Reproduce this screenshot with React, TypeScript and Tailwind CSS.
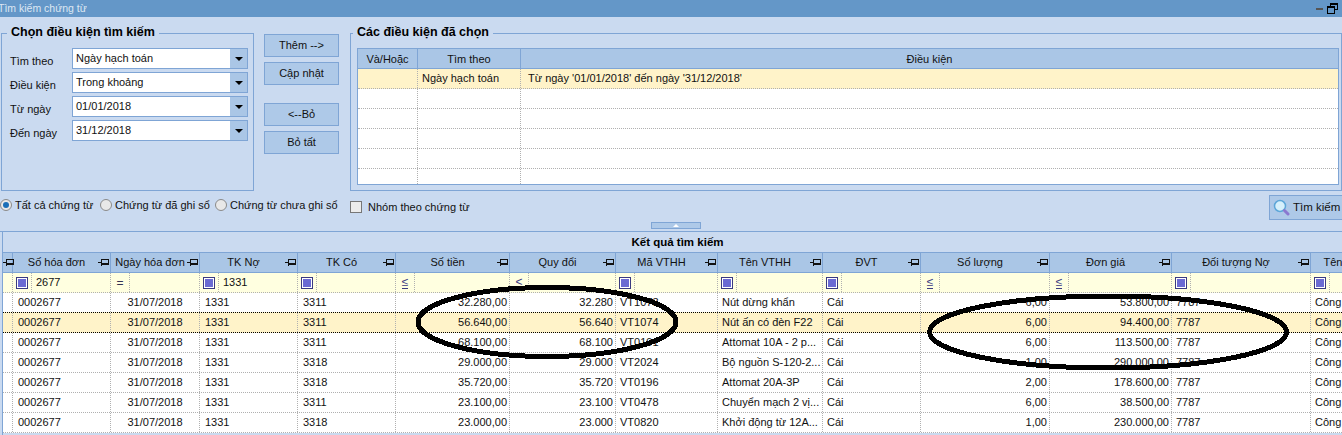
const COLS = "grid grid-cols-[98px_89px_98px_98px_114px_106px_102px_105px_98px_129px_122px_139px_55px]";

const headers = ["Số hóa đơn", "Ngày hóa đơn", "TK Nợ", "TK Có", "Số tiền", "Quy đổi", "Mã VTHH", "Tên VTHH", "ĐVT", "Số lượng", "Đơn giá", "Đối tượng Nợ", "Tên"];
const filters: [string, string][] = [["box", "2677"], ["eq", ""], ["box", "1331"], ["box", ""], ["le", ""], ["lt", ""], ["box", ""], ["box", ""], ["box", ""], ["le", ""], ["le", ""], ["box", ""], ["box", ""]];
const rows = [
  ["3311", "32.280,00", "32.280", "VT1073", "Nút dừng khẩn", "6,00", "53.800,00"],
  ["3311", "56.640,00", "56.640", "VT1074", "Nút ấn có đèn F22", "6,00", "94.400,00"],
  ["3311", "68.100,00", "68.100", "VT0191", "Attomat 10A - 2 p...", "6,00", "113.500,00"],
  ["3318", "29.000,00", "29.000", "VT2024", "Bộ nguồn S-120-2...", "1,00", "290.000,00"],
  ["3318", "35.720,00", "35.720", "VT0196", "Attomat 20A-3P", "2,00", "178.600,00"],
  ["3311", "23.100,00", "23.100", "VT0478", "Chuyển mạch 2 vị...", "6,00", "38.500,00"],
  ["3318", "23.000,00", "23.000", "VT0820", "Khởi động từ 12A...", "1,00", "230.000,00"],
];

function Pin() {
  return (
    <svg width="11" height="9" viewBox="0 0 11 9" className="shrink-0" shapeRendering="crispEdges">
      <path d="M0 4.5H3M3.5 1V8M3.5 1.5H10.5V6.5H3.5M3.5 5.5H10.5" fill="none" stroke="#111" strokeWidth="1" />
    </svg>
  );
}

function Combo({ text }: { text: string }) {
  return (
    <div className="flex h-[21px] w-[176px] border border-[#7fa5d5] bg-white">
      <div className="flex-1 pl-[3px] leading-[18px]">{text}</div>
      <div className="flex w-[17px] items-center justify-center bg-[#aac6e6]">
        <div className="h-0 w-0 border-x-[4px] border-t-[4px] border-x-transparent border-t-black" />
      </div>
    </div>
  );
}

function Btn({ text, className = "" }: { text: string; className?: string }) {
  return (
    <div className={"flex h-[23px] w-[75px] items-center justify-center border border-[#7fa5d5] bg-[#aec9e8] " + className}>{text}</div>
  );
}

function Radio({ checked, text, className = "" }: { checked?: boolean; text: string; className?: string }) {
  return (
    <div className={"flex items-center whitespace-nowrap " + className}>
      <div className="flex h-[12px] w-[12px] shrink-0 items-center justify-center rounded-full border border-[#8a8a8a] bg-[#e8e8e8]">
        {checked && <div className="h-[6px] w-[6px] rounded-full bg-[#1b6fb8]" />}
      </div>
      <span className="ml-[3px]">{text}</span>
    </div>
  );
}

function FilterIcon({ kind }: { kind: string }) {
  if (kind === "box")
    return (
      <div className="flex h-[12px] w-[12px] items-center justify-center border border-[#3a3a80] bg-white">
        <div className="h-[8px] w-[8px] bg-[#6a6ad2]" />
      </div>
    );
  if (kind === "eq") return <span className="text-[12px] leading-none text-[#333355]">=</span>;
  return <span className="border-b border-[#3a3a80] text-[12px] leading-[11px] text-[#3a3a80]">{kind === "le" ? "≤" : "<"}</span>;
}

export default function App() {
  return (
    <div className="relative flex h-[435px] w-[1342px] flex-col overflow-hidden bg-[#cadaf0] font-['Liberation_Sans',Arial,sans-serif] text-[11px] text-[#111111]">
      {/* title bar */}
      <div className="flex h-[17px] shrink-0 items-center justify-between bg-[#6497c8] pr-[4px]">
        <span className="-ml-[2px] text-[10.5px] text-[#dde7f3]">Tìm kiếm chứng từ</span>
        <div className="flex items-center gap-[4px]">
          <div className="h-[2px] w-[7px] bg-[#555]" />
          <svg width="11" height="11" viewBox="0 0 11 11" shapeRendering="crispEdges">
            <path d="M3.5 3V.5H10.5V6.5H7.5M.5 3.5H7.5V10.5H.5Z" fill="none" stroke="#000" />
            <path d="M0 4H8M3 1H11" stroke="#000" strokeWidth="1" />
          </svg>
        </div>
      </div>

      {/* top area */}
      <div className="mt-[16px] flex h-[158px] shrink-0 pl-[1px]">
        <div className="relative flex h-[158px] w-[253px] flex-col gap-[3px] border border-[#7fa5d5] pl-[70px] pt-[14px]">
          <span className="absolute -top-[9px] left-[5px] bg-[#cadaf0] px-[4px] text-[12.5px] font-bold leading-[15px] text-black">Chọn điều kiện tìm kiếm</span>
          {[["Tìm theo", "Ngày hạch toán"], ["Điều kiện", "Trong khoảng"], ["Từ ngày", "01/01/2018"], ["Đến ngày", "31/12/2018"]].map(([l, v]) => (
            <div key={l} className="relative">
              <span className="absolute -left-[62px] top-[5px]">{l}</span>
              <Combo text={v} />
            </div>
          ))}
        </div>

        <div className="ml-[10px] flex w-[75px] flex-col pt-[1px]">
          <Btn text="Thêm -->" />
          <Btn text="Cập nhật" className="mt-[5px]" />
          <Btn text="<--Bỏ" className="mt-[18px]" />
          <Btn text="Bỏ tất" className="mt-[5px]" />
        </div>

        <div className="relative ml-[11px] h-[158px] w-[992px] border border-[#7fa5d5] pl-[6px] pt-[14px]">
          <span className="absolute -top-[9px] left-[2px] bg-[#cadaf0] px-[4px] text-[12.5px] font-bold leading-[15px] text-black">Các điều kiện đã chọn</span>
          <div className="h-[137px] w-[982px] overflow-hidden border border-[#7fa5d5] bg-white">
            <div className="grid h-[20px] grid-cols-[60px_103px_1fr] border-b border-[#7fa5d5] bg-[#aac6e6] text-center leading-[20px]">
              <div className="border-r border-[#7fa5d5]">Và/Hoặc</div>
              <div className="border-r border-[#7fa5d5]">Tìm theo</div>
              <div>Điều kiện</div>
            </div>
            {[0, 1, 2, 3, 4, 5].map((i) => (
              <div key={i} className={"grid h-[20px] grid-cols-[60px_103px_1fr] border-b border-dotted border-[#b0b0b0] leading-[19px] " + (i === 0 ? "bg-[#fff3c9]" : "")}>
                <div className="border-r border-dotted border-[#b0b0b0]" />
                <div className="border-r border-dotted border-[#b0b0b0] pl-[4px]">{i === 0 ? "Ngày hạch toán" : ""}</div>
                <div className="pl-[7px]">{i === 0 ? "Từ ngày '01/01/2018' đến ngày '31/12/2018'" : ""}</div>
              </div>
            ))}
          </div>
        </div>
      </div>

      {/* options */}
      <div className="flex h-[29px] shrink-0 items-start">
        <div className="flex pt-[6px]">
          <Radio checked text="Tất cả chứng từ" className="w-[100px]" />
          <Radio text="Chứng từ đã ghi sổ" className="w-[115px]" />
          <Radio text="Chứng từ chưa ghi sổ" className="w-[135px]" />
        </div>
        <div className="flex items-center whitespace-nowrap pt-[8px]">
          <div className="flex h-[12px] w-[12px] border border-[#777] bg-[#ececec]" />
          <span className="ml-[6px]">Nhóm theo chứng từ</span>
        </div>
        <div className="ml-auto mt-[4px] flex h-[25px] w-[73px] items-center whitespace-nowrap border border-r-0 border-[#7fa5d5] bg-[#aec9e8] pl-[3px]">
          <svg width="17" height="17" viewBox="0 0 17 17" className="shrink-0">
            <circle cx="7" cy="7" r="5.5" fill="#d6f0fb" stroke="#5ca6d8" strokeWidth="1.5" />
            <path d="M11.5 11.5L15 15" stroke="#8a78d0" strokeWidth="3" strokeLinecap="round" />
          </svg>
          <span className="ml-[3px] text-[11.5px]">Tìm kiếm</span>
        </div>
      </div>

      {/* splitter */}
      <div className="flex h-[12px] shrink-0 justify-center border-b border-[#7fa5d5] pl-[10px]">
        <div className="mt-[2px] flex h-[7px] w-[50px] items-center justify-center border border-[#7fa5d5] bg-[#aec9e8]">
          <div className="h-0 w-0 border-x-[3px] border-b-[3px] border-x-transparent border-b-white" />
        </div>
      </div>

      {/* results */}
      <div className="ml-[2px] flex-1 border-l border-[#7fa5d5]">
        <div className="h-[20px] pl-[10px] text-center text-[11.5px] font-bold leading-[21px] text-black">Kết quả tìm kiếm</div>

        <div className="flex h-[21px] border-y border-[#7fa5d5] bg-[#aac6e6]">
          <div className="flex w-[10px] shrink-0 items-center border-r border-[#7fa5d5]"><Pin /></div>
          <div className={COLS}>
            {headers.map((h, i) => (
              <div key={h} className="relative overflow-hidden whitespace-nowrap border-r border-[#7fa5d5] pr-[10px] text-center leading-[19px]">
                {h}
                {i < 12 && <span className="absolute right-[1px] top-[5px]"><Pin /></span>}
              </div>
            ))}
          </div>
        </div>

        <div className="flex h-[20px] border-b border-dotted border-[#b0b0b0] bg-[#ffffe0]">
          <div className="w-[10px] shrink-0 border-r border-dotted border-[#b0b0b0]" />
          <div className={COLS}>
            {filters.map(([k, v], i) => (
              <div key={i} className="flex border-r border-dotted border-[#b0b0b0] leading-[19px]">
                <div className="flex w-[19px] shrink-0 items-center justify-center border-r border-dotted border-[#b0b0b0]"><FilterIcon kind={k} /></div>
                <span className="pl-[4px]">{v}</span>
              </div>
            ))}
          </div>
        </div>

        <div className="bg-white">
          {rows.map((r, i) => {
            const sel = i === 1;
            const cell = "overflow-hidden whitespace-nowrap border-r border-dotted border-[#b0b0b0] ";
            return (
              <div key={i} className={"flex border-b border-dotted " + (sel ? "-mt-[1px] h-[21px] border-t border-black bg-[#fff3c9]" : "h-[20px] border-[#b0b0b0]")}>
                <div className="w-[10px] shrink-0 border-r border-dotted border-[#b0b0b0]" />
                <div className={COLS + " leading-[19px]"}>
                  <div className={cell + "pl-[5px]"}>0002677</div>
                  <div className={cell + "text-center"}>31/07/2018</div>
                  <div className={cell + "pl-[5px]"}>1331</div>
                  <div className={cell + "pl-[5px]"}>{r[0]}</div>
                  <div className={cell + "pr-[2px] text-right"}>{r[1]}</div>
                  <div className={cell + "pr-[2px] text-right"}>{r[2]}</div>
                  <div className={cell + "pl-[4px]"}>{r[3]}</div>
                  <div className={cell + "pl-[4px]"}>{r[4]}</div>
                  <div className={cell + "pl-[4px]"}>Cái</div>
                  <div className={cell + "pr-[2px] text-right"}>{r[5]}</div>
                  <div className={cell + "pr-[2px] text-right"}>{r[6]}</div>
                  <div className={cell + "pl-[4px]"}>7787</div>
                  <div className={cell + "pl-[4px]"}>Công</div>
                </div>
              </div>
            );
          })}
        </div>
      </div>

      {/* hand-drawn marks over the picture */}
      <svg className="pointer-events-none absolute left-0 top-0" width="1342" height="435" shapeRendering="crispEdges">
        <ellipse cx="547" cy="322" rx="129" ry="34.5" fill="none" stroke="#000" strokeWidth="5" />
        <ellipse cx="1108" cy="332" rx="178.5" ry="36" fill="none" stroke="#000" strokeWidth="5" />
      </svg>
    </div>
  );
}
